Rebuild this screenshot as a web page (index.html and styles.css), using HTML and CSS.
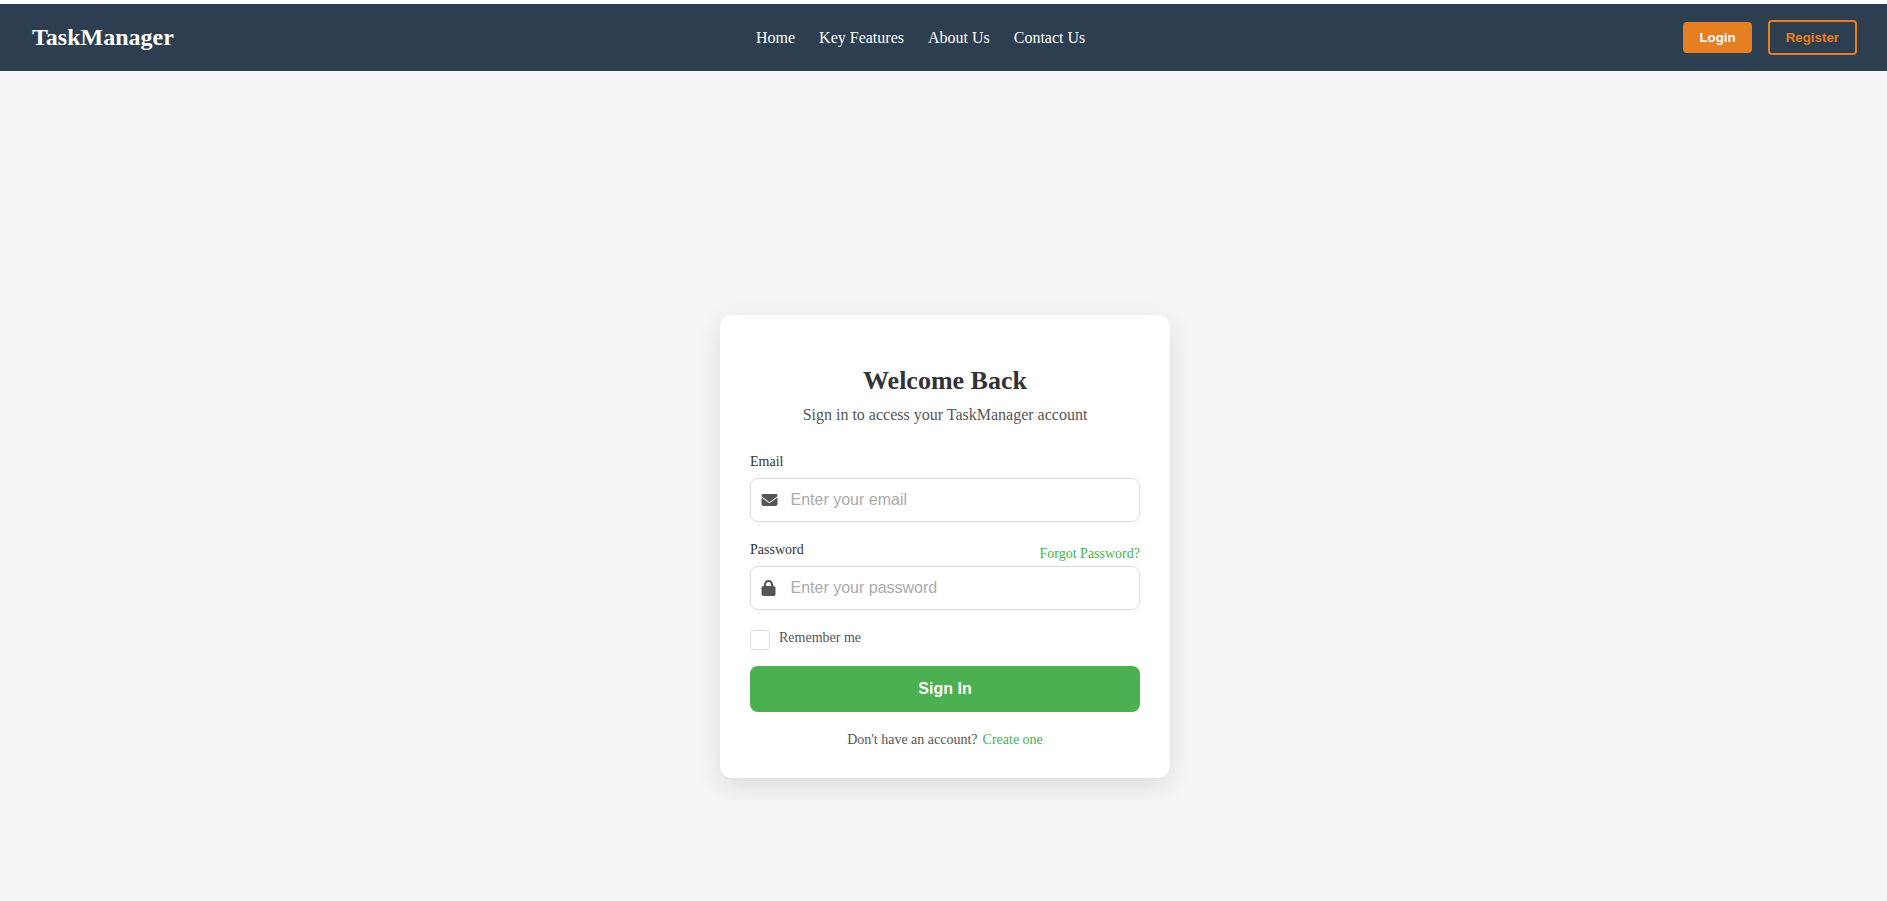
FILE: index.html
```html
<!DOCTYPE html>
<html lang="en">
<head>
<meta charset="utf-8">
<title>TaskManager</title>
<link rel="stylesheet" href="styles.css">
</head>
<body>
<header class="navbar">
  <div class="logo">TaskManager</div>
  <nav class="links"><a>Home</a><a>Key Features</a><a>About Us</a><a>Contact Us</a></nav>
  <div class="actions"><button class="btn login">Login</button><button class="btn register">Register</button></div>
</header>
<main class="page">
  <form class="card">
    <h1 class="title">Welcome Back</h1>
    <p class="subtitle">Sign in to access your TaskManager account</p>
    <div class="label-row"><label class="label" for="email">Email</label></div>
    <div class="field">
      <svg class="icon" viewBox="0 0 512 512"><path d="M48 64C21.500 64 0 85.500 0 112c0 15.100 7.100 29.300 19.200 38.400L236.800 313.600c11.400 8.500 27 8.500 38.400 0L492.800 150.400c12.100-9.100 19.200-23.300 19.200-38.400c0-26.500-21.500-48-48-48H48zM0 176V384c0 35.300 28.700 64 64 64H448c35.300 0 64-28.700 64-64V176L294.400 339.200c-22.800 17.100-54 17.100-76.800 0L0 176z"/></svg>
      <input class="input" id="email" type="email" placeholder="Enter your email">
    </div>
    <div class="label-row"><label class="label" for="password">Password</label><a class="link forgot">Forgot Password?</a></div>
    <div class="field">
      <svg class="icon lock" viewBox="0 0 448 512"><path d="M144 144v48H304V144c0-44.200-35.800-80-80-80s-80 35.800-80 80zM80 192V144C80 64.500 144.500 0 224 0s144 64.500 144 144v48h16c35.300 0 64 28.700 64 64V448c0 35.300-28.700 64-64 64H64c-35.300 0-64-28.700-64-64V256c0-35.300 28.700-64 64-64H80z"/></svg>
      <input class="input" id="password" type="password" placeholder="Enter your password">
    </div>
    <div class="remember"><input class="check" id="remember" type="checkbox"><label class="remember-label" for="remember">Remember me</label></div>
    <button class="submit" type="button">Sign In</button>
    <p class="signup"><span>Don't have an account?</span><a class="link">Create one</a></p>
  </form>
</main>
</body>
</html>
```
FILE: styles.css
```css
* { box-sizing: border-box; }
body {
  margin: 0;
  padding-top: 4px;
  height: 901px;
  display: flex;
  flex-direction: column;
  background: #fff;
  font-family: "Liberation Serif", "Times New Roman", serif;
  overflow: hidden;
}
.navbar {
  height: 67px;
  flex: none;
  display: flex;
  align-items: center;
  padding: 0 30px 0 32px;
  background: #2c3e50;
  color: #fff;
}
.logo { width: 724px; font-size: 24px; font-weight: bold; }
.links { display: flex; gap: 24px; font-size: 16px; }
.actions { display: flex; align-items: center; gap: 16px; margin-left: auto; }
.btn {
  padding: 8px 16px;
  border: 0;
  border-radius: 4px;
  font: bold 13.333px "Liberation Sans", Arial, sans-serif;
}
.login { background: #e67e22; color: #fff; }
.register { background: transparent; border: 2px solid #e67e22; color: #e67e22; }
.page {
  flex: 1;
  background: #f5f5f5;
  display: flex;
  justify-content: center;
  align-items: flex-start;
  padding: 244px 0 0 3px;
}
.card {
  width: 450px;
  height: 463px;
  padding: 51px 30px 0;
  background: #fff;
  border-radius: 12px;
  box-shadow: 0 8px 24px rgba(0, 0, 0, 0.1);
  color: #555;
  font-size: 14px;
}
.title { margin: 0; font-size: 26px; line-height: 30px; text-align: center; color: #333; }
.subtitle { margin: 9px 0 27px; font-size: 16px; line-height: 20px; text-align: center; }
.label-row { height: 26px; display: flex; justify-content: space-between; color: #333; line-height: 16px; }
.label { padding-top: 2px; }
.forgot { padding-top: 6px; }
.link { color: #4caf50; }
.field {
  height: 44px;
  margin-bottom: 18px;
  display: flex;
  align-items: center;
  padding-left: 10px;
  border: 1px solid #ddd;
  border-radius: 8px;
}
.icon { width: 17px; height: 16px; margin-bottom: 1px; fill: #555; flex: none; }
.lock { width: 15px; margin-right: 2px; }
.input {
  flex: 1;
  min-width: 0;
  margin-left: 12.5px;
  padding: 0;
  border: 0;
  outline: 0;
  background: none;
  font: 16px "Liberation Sans", Arial, sans-serif;
}
.input::placeholder { color: #aaa; }
.remember { display: flex; gap: 9px; height: 20px; margin: 20px 0 16px; line-height: 16px; }
.check {
  appearance: none;
  width: 20px;
  height: 20px;
  margin: 0;
  border: 1px solid #ddd;
  border-radius: 4px;
}
.submit {
  display: block;
  width: 100%;
  height: 46px;
  border: 0;
  border-radius: 8px;
  background: #4caf50;
  color: #fff;
  font: bold 16px "Liberation Sans", Arial, sans-serif;
}
.signup { display: flex; justify-content: center; gap: 5px; margin: 20px 0 0; line-height: 16px; }
```
